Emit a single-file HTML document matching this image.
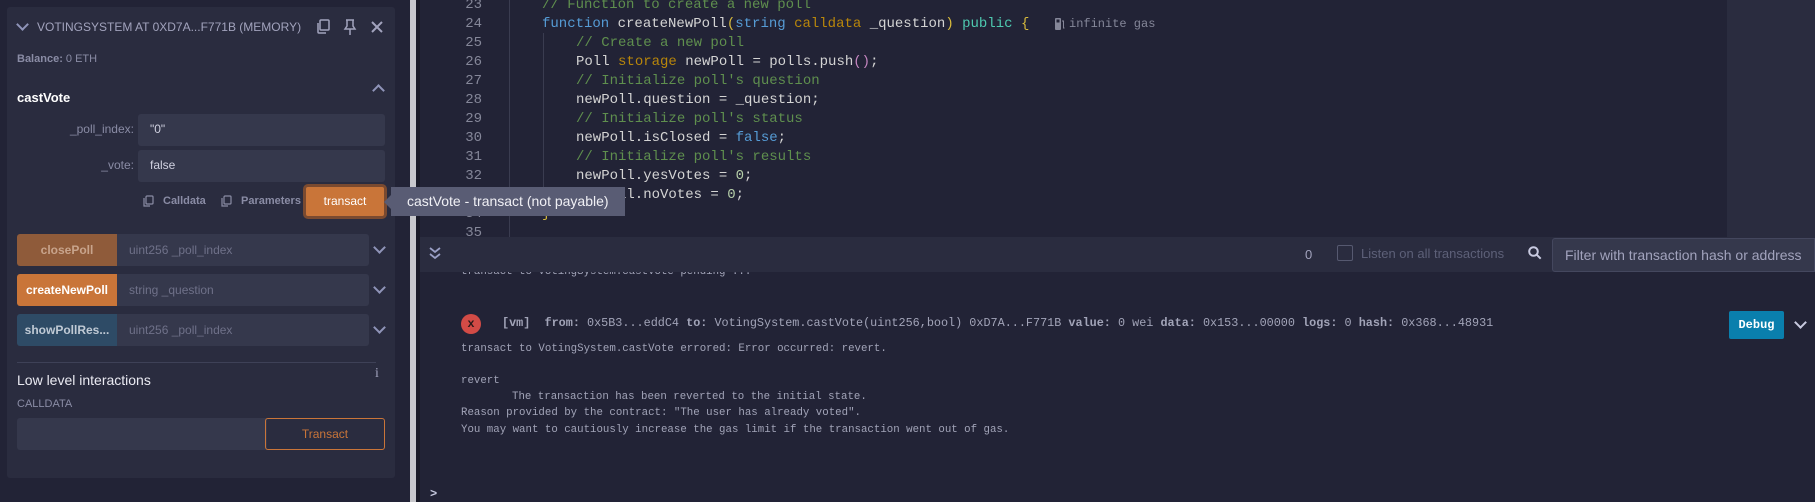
<!DOCTYPE html>
<html><head><meta charset="utf-8"><style>
*{margin:0;padding:0;box-sizing:border-box}
body{width:1815px;height:502px;background:#222336;position:relative;overflow:hidden;font-family:"Liberation Sans",sans-serif}
.a{position:absolute;white-space:nowrap}
.card{left:7px;top:7px;width:388px;height:471px;background:#2a2c3f;border-radius:3px}
.inp{background:#35384c;border-radius:3px}
.lbl{color:#8a8ca5;font-size:12px}
.fb{height:32px;border-radius:3px 0 0 3px;font-size:12px;font-weight:bold;text-align:center;line-height:32px}
.ph{color:#6f7189;font-size:12px;line-height:32px;padding-left:12px;border-radius:0 3px 3px 0;background:#35384c}
.code{font-family:"Liberation Mono",monospace;font-size:14px;line-height:19px;color:#d4d4d4}
.ln{font-family:"Liberation Mono",monospace;font-size:14px;line-height:19px;color:#858799;width:40px;text-align:right;left:442px}
.cm{color:#5f8f4e}.kw{color:#569cd6}.y{color:#d7ba3c}.dy{color:#b8860b}.tl{color:#4ec9b0}.nm{color:#b5cea8}.mg{color:#c586c0}
.term{font-family:"Liberation Mono",monospace;font-size:10.75px;color:#a2a4b8}
.chev{width:9px;height:9px;border-right:2px solid #8f94b8;border-bottom:2px solid #8f94b8;transform:rotate(45deg)}
</style></head><body>
<div class="a card"></div>
<div class="a chev" style="left:18px;top:20px"></div>
<div class="a" style="left:37px;top:20px;font-size:12px;color:#a2a3bd">VOTINGSYSTEM AT 0XD7A...F771B (MEMORY)</div>
<svg class="a" style="left:315px;top:19px" width="16" height="16" viewBox="0 0 16 16" fill="none" stroke="#a2a3bd" stroke-width="1.5"><rect x="5" y="1" width="9" height="10" rx="1"/><path d="M3 4v9a1 1 0 0 0 1 1h7"/></svg>
<svg class="a" style="left:343px;top:19px" width="14" height="16" viewBox="0 0 14 16" fill="none" stroke="#a2a3bd" stroke-width="1.5"><path d="M3 1h8M4 1v6L2 10h10L10 7V1M7 10v6"/></svg>
<svg class="a" style="left:371px;top:21px" width="12" height="12" viewBox="0 0 12 12" stroke="#a2a3bd" stroke-width="2"><path d="M1 1l10 10M11 1L1 11"/></svg>
<div class="a" style="left:17px;top:53px;font-size:11px;color:#8a8ca5"><b>Balance:</b> 0 ETH</div>
<div class="a" style="left:17px;top:90px;font-size:13px;font-weight:bold;color:#fff">castVote</div>
<div class="a" style="left:374px;top:86px;width:9px;height:9px;border-left:2px solid #8f94b8;border-top:2px solid #8f94b8;transform:rotate(45deg)"></div>
<div class="a lbl" style="left:60px;top:122px;width:74px;text-align:right">_poll_index:</div>
<div class="a inp" style="left:138px;top:114px;width:247px;height:32px"></div>
<div class="a" style="left:150px;top:122px;font-size:12px;color:#d0d1e0">"0"</div>
<div class="a lbl" style="left:60px;top:158px;width:74px;text-align:right">_vote:</div>
<div class="a inp" style="left:138px;top:150px;width:247px;height:32px"></div>
<div class="a" style="left:150px;top:158px;font-size:12px;color:#d0d1e0">false</div>
<svg class="a" style="left:143px;top:195px" width="11" height="13" viewBox="0 0 11 13" fill="none" stroke="#8a8ca5" stroke-width="1.2"><rect x="3" y="1" width="7" height="8" rx="1"/><path d="M1 3v8h6"/></svg>
<div class="a" style="left:163px;top:195px;font-size:11px;font-weight:bold;color:#8a8ca5">Calldata</div>
<svg class="a" style="left:221px;top:195px" width="11" height="13" viewBox="0 0 11 13" fill="none" stroke="#8a8ca5" stroke-width="1.2"><rect x="3" y="1" width="7" height="8" rx="1"/><path d="M1 3v8h6"/></svg>
<div class="a" style="left:241px;top:195px;font-size:11px;font-weight:bold;color:#8a8ca5">Parameters</div>
<div class="a" style="left:303px;top:184px;width:84px;height:35px;border:3px solid #7a4a30;border-radius:5px;background:#c97539;color:#fff;font-size:12px;text-align:center;line-height:28px">transact</div>
<div class="a fb" style="left:17px;top:234px;width:100px;background:#8f5b3a;color:#c8a48c">closePoll</div>
<div class="a ph" style="left:117px;top:234px;width:252px">uint256 _poll_index</div>
<div class="a chev" style="left:375px;top:243px"></div>
<div class="a fb" style="left:17px;top:274px;width:100px;background:#c97539;color:#fff">createNewPoll</div>
<div class="a ph" style="left:117px;top:274px;width:252px">string _question</div>
<div class="a chev" style="left:375px;top:283px"></div>
<div class="a fb" style="left:17px;top:314px;width:100px;background:#2e4b66;color:#c0cad5">showPollRes...</div>
<div class="a ph" style="left:117px;top:314px;width:252px">uint256 _poll_index</div>
<div class="a chev" style="left:375px;top:323px"></div>
<div class="a" style="left:17px;top:362px;width:359px;height:1px;background:#3e4157"></div>
<div class="a" style="left:17px;top:372px;font-size:14px;color:#eaeaf2">Low level interactions</div>
<div class="a" style="left:375px;top:366px;font-size:14px;color:#a2a3bd;font-family:'Liberation Serif',serif">i</div>
<div class="a" style="left:17px;top:398px;font-size:11px;color:#8a8ca5">CALLDATA</div>
<div class="a inp" style="left:17px;top:418px;width:250px;height:32px;border-radius:3px 0 0 3px"></div>
<div class="a" style="left:265px;top:418px;width:120px;height:32px;border:1px solid #c97539;border-radius:3px;color:#c97539;font-size:12px;text-align:center;line-height:30px">Transact</div>
<div class="a" style="left:410px;top:0;width:6px;height:502px;background:#c8c8cc"></div>
<div class="a" style="left:416px;top:0;width:4px;height:502px;background:#1a1b28"></div>
<div class="a" style="left:1727px;top:0;width:88px;height:237px;background:#2a2c3f"></div>
<div class="a" style="left:509px;top:0;width:1px;height:237px;background:#3a3c50"></div>
<div class="a" style="left:543px;top:33px;width:1px;height:175px;background:#3a3c50"></div>
<div class="a ln" style="top:-4px">23</div><div class="a ln" style="top:15px">24</div><div class="a ln" style="top:34px">25</div><div class="a ln" style="top:53px">26</div><div class="a ln" style="top:72px">27</div><div class="a ln" style="top:91px">28</div><div class="a ln" style="top:110px">29</div><div class="a ln" style="top:129px">30</div><div class="a ln" style="top:148px">31</div><div class="a ln" style="top:167px">32</div><div class="a ln" style="top:186px">33</div><div class="a ln" style="top:205px">34</div><div class="a ln" style="top:224px">35</div>
<div class="a code cm" style="left:542px;top:-4px">// Function to create a new poll</div>
<div class="a code" style="left:542px;top:15px"><span class="kw">function</span> createNewPoll<span class="y">(</span><span class="kw">string</span> <span class="dy">calldata</span> _question<span class="y">)</span> <span class="tl">public</span> <span class="y">{</span></div>
<svg class="a" style="left:1055px;top:18px" width="10" height="12" viewBox="0 0 10 12" fill="#858799"><rect x="0" y="0" width="6" height="12" rx="1"/><rect x="1.5" y="1.5" width="3" height="3" fill="#222336"/><path d="M7 3h1.5v7h1" stroke="#858799" fill="none"/></svg>
<div class="a" style="left:1069px;top:17px;font-family:'Liberation Mono',monospace;font-size:12px;color:#858799">infinite gas</div>
<div class="a code cm" style="left:576px;top:34px">// Create a new poll</div>
<div class="a code" style="left:576px;top:53px">Poll <span class="dy">storage</span> newPoll = polls.push<span class="mg">()</span>;</div>
<div class="a code cm" style="left:576px;top:72px">// Initialize poll's question</div>
<div class="a code" style="left:576px;top:91px">newPoll.question = _question;</div>
<div class="a code cm" style="left:576px;top:110px">// Initialize poll's status</div>
<div class="a code" style="left:576px;top:129px">newPoll.isClosed = <span class="kw">false</span>;</div>
<div class="a code cm" style="left:576px;top:148px">// Initialize poll's results</div>
<div class="a code" style="left:576px;top:167px">newPoll.yesVotes = <span class="nm">0</span>;</div>
<div class="a code" style="left:576px;top:186px">newPoll.noVotes = <span class="nm">0</span>;</div>
<div class="a code y" style="left:542px;top:205px">}</div>
<div class="a" style="left:384px;top:195px;width:0;height:0;border-top:7px solid transparent;border-bottom:7px solid transparent;border-right:7px solid #595c74"></div>
<div class="a" style="left:391px;top:187px;width:234px;height:29px;background:#595c74;color:#f0f0f5;font-size:14px;line-height:29px;padding-left:16px">castVote - transact (not payable)</div>
<div class="a term" style="left:461px;top:266px">transact to VotingSystem.castVote pending ...</div>
<div class="a" style="left:420px;top:237px;width:1395px;height:35px;background:#2a2c3f"></div>
<svg class="a" style="left:429px;top:246px" width="12" height="14" viewBox="0 0 12 14" fill="none" stroke="#9a9fc6" stroke-width="1.8"><path d="M1 2l5 4 5-4M1 8l5 4 5-4"/></svg>
<div class="a" style="left:1305px;top:247px;font-size:13px;color:#a2a3bd">0</div>
<div class="a" style="left:1337px;top:245px;width:16px;height:16px;border:1px solid #565970;border-radius:2px"></div>
<div class="a" style="left:1361px;top:246px;font-size:13px;color:#5d6078">Listen on all transactions</div>
<svg class="a" style="left:1528px;top:246px" width="14" height="14" viewBox="0 0 14 14" fill="none" stroke="#c8cae0" stroke-width="2"><circle cx="5.5" cy="5.5" r="4.3"/><path d="M8.7 8.7l4 4"/></svg>
<div class="a" style="left:1552px;top:238px;width:263px;height:34px;background:#35384c;border:1px solid #44475e;border-radius:3px 0 0 3px;color:#a2a3bd;font-size:14px;line-height:32px;padding-left:12px">Filter with transaction hash or address</div>
<div class="a" style="left:461px;top:314px;width:20px;height:20px;border-radius:50%;background:#d24b46;color:#2a1a1a;font-size:12px;font-weight:bold;text-align:center;line-height:20px;font-family:'Liberation Mono',monospace">x</div>
<div class="a" style="left:502px;top:316px;font-family:'Liberation Mono',monospace;font-size:11.8px;color:#a2a4b8"><b>[vm]</b>&nbsp; <b>from:</b> 0x5B3...eddC4 <b>to:</b> VotingSystem.castVote(uint256,bool) 0xD7A...F771B <b>value:</b> 0 wei <b>data:</b> 0x153...00000 <b>logs:</b> 0 <b>hash:</b> 0x368...48931</div>
<div class="a" style="left:1729px;top:311px;width:55px;height:28px;background:#0a7fad;border-radius:2px;color:#fff;font-family:'Liberation Mono',monospace;font-size:12px;font-weight:bold;text-align:center;line-height:28px">Debug</div>
<div class="a chev" style="left:1796px;top:318px;border-color:#c8cae0"></div>
<div class="a term" style="left:461px;top:343px">transact to VotingSystem.castVote errored: Error occurred: revert.</div>
<div class="a term" style="left:461px;top:375px">revert</div>
<div class="a term" style="left:512px;top:391px">The transaction has been reverted to the initial state.</div>
<div class="a term" style="left:461px;top:407px">Reason provided by the contract: "The user has already voted".</div>
<div class="a term" style="left:461px;top:424px">You may want to cautiously increase the gas limit if the transaction went out of gas.</div>
<div class="a" style="left:430px;top:487px;font-family:'Liberation Mono',monospace;font-size:12px;font-weight:bold;color:#c8cae0">&gt;</div>
</body></html>
